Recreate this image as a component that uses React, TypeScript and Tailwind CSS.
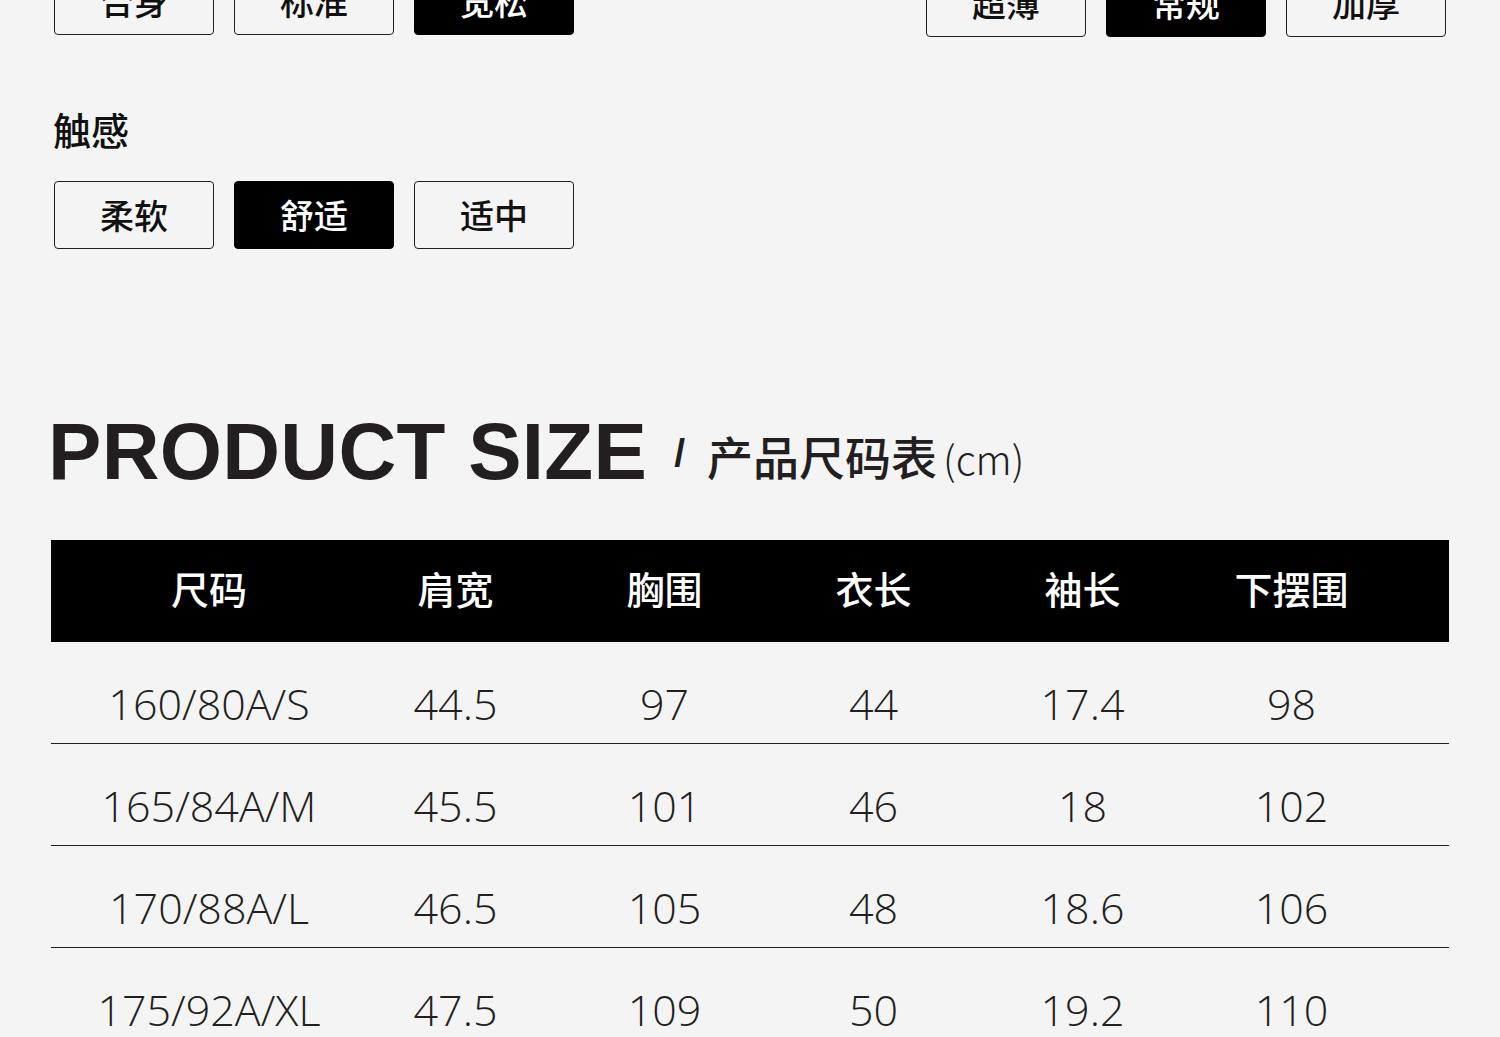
const cjk = "font-['Noto_Sans_CJK_SC',sans-serif]";

const fitOptions = [
  { label: "合身", active: false },
  { label: "标准", active: false },
  { label: "宽松", active: true },
];

const thicknessOptions = [
  { label: "超薄", active: false },
  { label: "常规", active: true },
  { label: "加厚", active: false },
];

const touchOptions = [
  { label: "柔软", active: false },
  { label: "舒适", active: true },
  { label: "适中", active: false },
];

const headers = ["尺码", "肩宽", "胸围", "衣长", "袖长", "下摆围"];

const rows = [
  ["160/80A/S", "44.5", "97", "44", "17.4", "98"],
  ["165/84A/M", "45.5", "101", "46", "18", "102"],
  ["170/88A/L", "46.5", "105", "48", "18.6", "106"],
  ["175/92A/XL", "47.5", "109", "50", "19.2", "110"],
];

const OptionButton = ({ label, active }: { label: string; active: boolean }) => {
  return (
    <div
      className={`flex h-[68px] w-[160px] items-center justify-center rounded-[4px] border text-[34px] leading-none font-medium ${cjk} ${
        active ? "border-black bg-black text-white" : "border-[#231f20] text-[#111]"
      }`}
    >
      {label}
    </div>
  );
};

const OptionGroup = ({ items }: { items: { label: string; active: boolean }[] }) => {
  return (
    <div className="flex gap-[20px]">
      {items.map((item) => (
        <OptionButton key={item.label} label={item.label} active={item.active} />
      ))}
    </div>
  );
};

export default function App() {
  return (
    <div className="min-h-screen w-full overflow-hidden bg-[#f4f4f4] text-[#231f20]">
      <div className="px-[51px]">
        <div className="-mt-[33px] flex items-start justify-between px-[3px]">
          <OptionGroup items={fitOptions} />
          <div className="mt-[2px]">
            <OptionGroup items={thicknessOptions} />
          </div>
        </div>

        <h3 className={`mt-[73px] pl-[2px] text-[38px] leading-none font-medium text-[#111] ${cjk}`}>触感</h3>
        <div className="mt-[33px] pl-[3px]">
          <OptionGroup items={touchOptions} />
        </div>

        <div className="mt-[163px] flex items-end">
          <h2 className="-ml-[3px] font-['Liberation_Sans',sans-serif] text-[80px] leading-none font-bold tracking-[0.3px] text-[#231f20]">
            PRODUCT SIZE
          </h2>
          <div className="ml-[27px] flex items-baseline pb-[14px]">
            <span className="mt-[1px] self-start font-['Liberation_Sans',sans-serif] text-[39px] leading-none font-bold">
              /
            </span>
            <span className={`ml-[22px] text-[46px] leading-none font-medium ${cjk}`}>产品尺码表</span>
            <span className={`ml-[6px] text-[40px] leading-none font-light ${cjk}`}>(cm)</span>
          </div>
        </div>

        <div className="mt-[48px] w-full">
          <div className="grid h-[102px] grid-cols-[300px_repeat(5,209px)] items-center bg-black pb-[6px] text-white">
            {headers.map((h, i) => (
              <div
                key={h}
                className={`text-center text-[38px] leading-none font-medium ${cjk} ${i === 0 ? "pl-[16px]" : ""}`}
              >
                {h}
              </div>
            ))}
          </div>
          {rows.map((row) => (
            <div
              key={row[0]}
              className="grid h-[102px] grid-cols-[300px_repeat(5,209px)] items-start border-b border-[#231f20] pt-[40px]"
            >
              {row.map((cell, i) => (
                <div
                  key={i}
                  className={`text-center font-['Open_Sans',sans-serif] text-[43px] leading-none font-light ${
                    i === 0 ? "pl-[16px]" : ""
                  }`}
                >
                  {cell}
                </div>
              ))}
            </div>
          ))}
        </div>
      </div>
    </div>
  );
}
